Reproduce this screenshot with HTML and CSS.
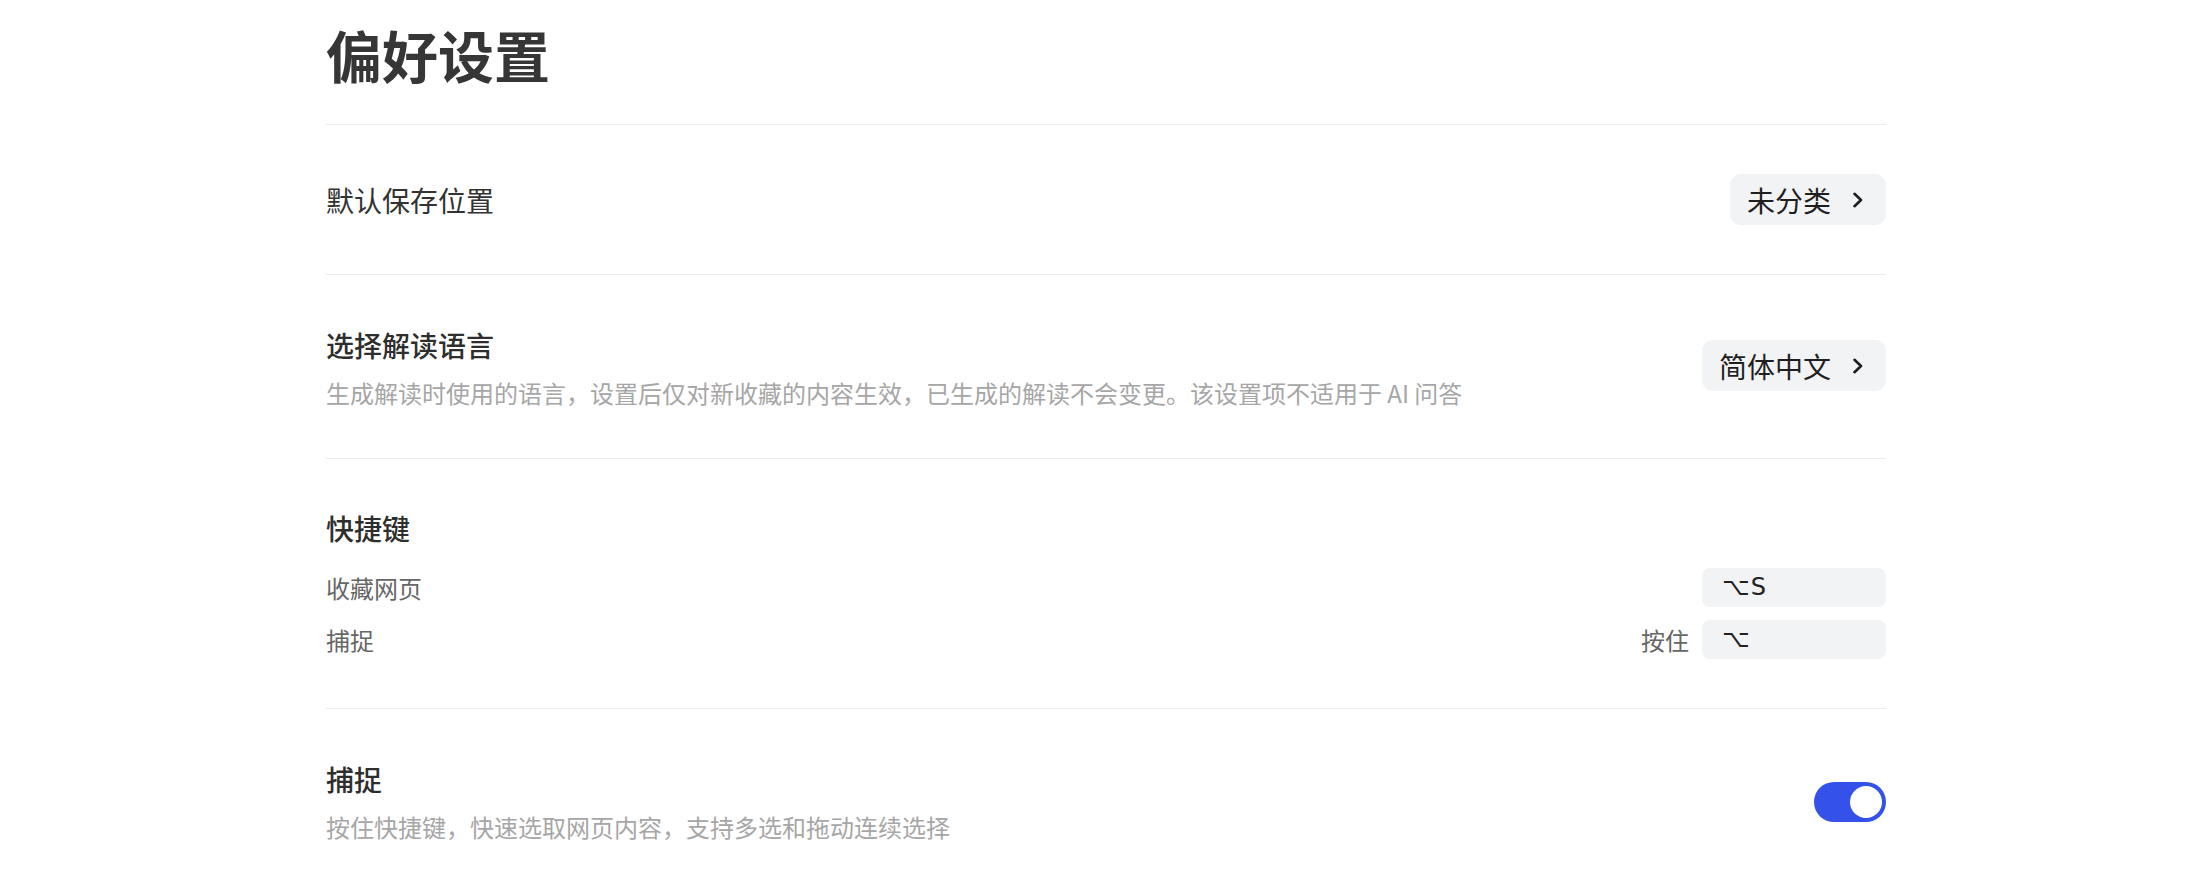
FILE: index.html
```html
<!DOCTYPE html>
<html lang="zh-CN">
<head>
  <meta charset="UTF-8">
  <meta name="viewport" content="width=device-width, initial-scale=1.0">
  <title>偏好设置</title>
  <link rel="stylesheet" href="styles.css">
</head>
<body>
  <main class="page">
    <h1 class="page-title">偏好设置</h1>

    <!-- 默认保存位置 -->
    <section class="row">
      <div class="row-label">默认保存位置</div>
      <button class="select-btn">
        未分类
        <svg viewBox="0 0 16 16" width="16" height="16"><path d="M4.5 1.8 L11 8 L4.5 14.2" /></svg>
      </button>
    </section>

    <!-- 解读语言 -->
    <section class="row row-desc">
      <div class="row-text">
        <div class="row-title">选择解读语言</div>
        <div class="row-sub">生成解读时使用的语言，设置后仅对新收藏的内容生效，已生成的解读不会变更。该设置项不适用于 AI 问答</div>
      </div>
      <button class="select-btn">
        简体中文
        <svg viewBox="0 0 16 16" width="16" height="16"><path d="M4.5 1.8 L11 8 L4.5 14.2" /></svg>
      </button>
    </section>

    <!-- 快捷键 -->
    <section class="row row-shortcuts">
      <div class="row-title">快捷键</div>
      <div class="shortcut-list">
        <div class="shortcut">
          <span class="shortcut-name">收藏网页</span>
          <div class="shortcut-keys">
            <span class="key">⌥S</span>
          </div>
        </div>
        <div class="shortcut">
          <span class="shortcut-name">捕捉</span>
          <div class="shortcut-keys">
            <span class="key-hint">按住</span>
            <span class="key">⌥</span>
          </div>
        </div>
      </div>
    </section>

    <!-- 捕捉开关 -->
    <section class="row row-desc row-last">
      <div class="row-text">
        <div class="row-title">捕捉</div>
        <div class="row-sub">按住快捷键，快速选取网页内容，支持多选和拖动连续选择</div>
      </div>
      <span class="toggle on"><span class="knob"></span></span>
    </section>
  </main>
</body>
</html>
```

FILE: styles.css
```css
/* Generale */
body {
  margin: 0;
  background: #fff;
  color: #333;
  font-family: "Noto Sans CJK SC", "Noto Sans", sans-serif;
  overflow: hidden;
}

.page {
  width: 1560px;
  margin: 0 auto;
  padding-left: 6px;
}

.page-title {
  margin: 0;
  padding: 22px 0 38px;
  font-size: 56px;
  line-height: 64px;
  font-weight: 700;
  color: #363636;
  border-bottom: 1px solid #ededed;
}

/* Righe */
.row {
  display: flex;
  align-items: center;
  justify-content: space-between;
  padding: 49px 0;
  border-bottom: 1px solid #ededed;
}

.row-desc {
  padding-top: 52px;
}

.row-desc .select-btn {
  margin-bottom: 5px;
}

.row-last {
  border-bottom: none;
}

.row-label {
  font-size: 28px;
  line-height: 36px;
  color: #333;
}

.row-title {
  font-size: 28px;
  line-height: 36px;
  font-weight: 500;
  color: #2e2e2e;
}

.row-sub {
  margin-top: 14px;
  font-size: 24px;
  line-height: 32px;
  color: #a6a6a6;
}

/* Bottone selezione */
.select-btn {
  display: flex;
  align-items: center;
  gap: 19px;
  height: 51px;
  padding: 0 20px 0 17px;
  border: none;
  border-radius: 11px;
  background: #f2f3f5;
  color: #1f1f1f;
  font-family: inherit;
  font-size: 28px;
  cursor: pointer;
}

.select-btn svg {
  fill: none;
  stroke: #1f1f1f;
  stroke-width: 2.6;
  stroke-linecap: round;
  stroke-linejoin: round;
}

/* Scorciatoie */
.row-shortcuts {
  display: block;
  padding: 51px 0 49px;
}

.shortcut-list {
  display: flex;
  flex-direction: column;
  gap: 13px;
  margin-top: 22px;
}

.shortcut {
  display: flex;
  align-items: center;
  justify-content: space-between;
  height: 39px;
}

.shortcut-name,
.key-hint {
  font-size: 24px;
  color: #666;
}

.shortcut-keys {
  display: flex;
  align-items: center;
  gap: 13px;
}

.key {
  box-sizing: border-box;
  width: 184px;
  height: 39px;
  padding-left: 20px;
  border-radius: 8px;
  background: #f2f3f5;
  color: #222;
  font-family: "DejaVu Sans", sans-serif;
  font-size: 24px;
  letter-spacing: 1px;
  line-height: 39px;
}

/* Interruttore */
.toggle {
  position: relative;
  width: 72px;
  height: 40px;
  border-radius: 20px;
  background: #d6d6d6;
}

.toggle.on {
  background: #3451ea;
}

.toggle .knob {
  position: absolute;
  top: 4px;
  left: 4px;
  width: 32px;
  height: 32px;
  border-radius: 50%;
  background: #fff;
}

.toggle.on .knob {
  left: 36px;
}
```
